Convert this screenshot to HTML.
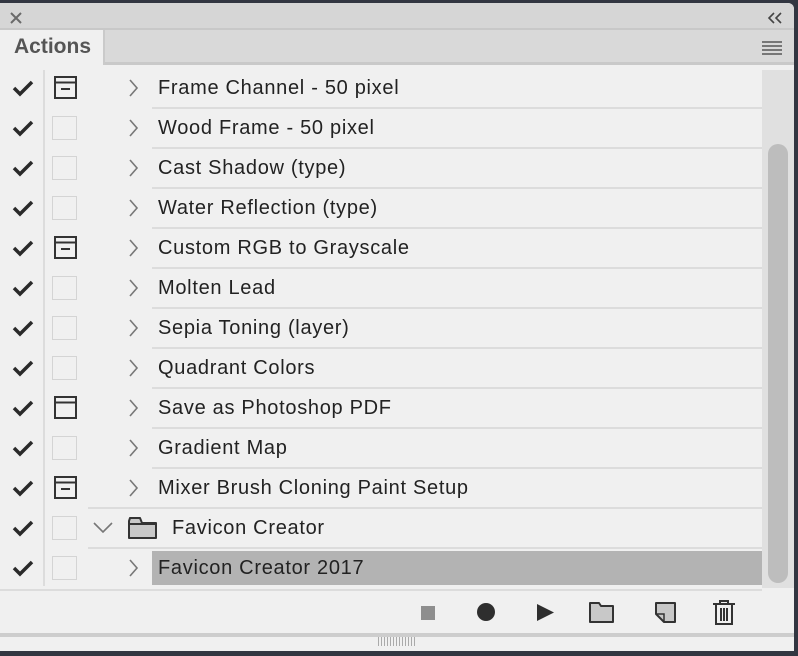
<!DOCTYPE html>
<html><head><meta charset="utf-8"><style>
*{margin:0;padding:0;box-sizing:border-box}
body{width:798px;height:656px;background:#323641;position:relative;overflow:hidden;font-family:"Liberation Sans",sans-serif}
.p{position:absolute}
.panel{left:0;top:3px;width:794px;height:648px;background:#f0f0f0;border-top-right-radius:6px;overflow:hidden}
.row{position:absolute;left:0;width:762px;height:40px}
.ck{position:absolute;left:12px;top:11px}
.bx{position:absolute;left:52px;top:8px;width:25px;height:24px;border:1.5px solid #d4d4d4}
.ch{position:absolute;left:128px;top:11px}
.t{position:absolute;left:158px;top:9px;font-size:20px;color:#222;letter-spacing:0.7px;white-space:nowrap}
.sep{position:absolute;left:152px;right:0;bottom:-1px;height:2px;background:#dcdcdc}
</style></head><body>
<div class="p panel">
 <div class="p" style="left:0;top:0;width:794px;height:25px;background:#d6d6d6"></div>
 <div class="p" style="left:0;top:25px;width:794px;height:2px;background:#c8c8c8"></div>
 <div class="p" style="left:0;top:27px;width:794px;height:32px;background:#d9d9d9"></div>
 <div class="p" style="left:0;top:59px;width:794px;height:3px;background:#c9c9c9"></div>
 <div class="p" style="left:0;top:27px;width:105px;height:35px;background:#f0f0f0;border-right:2px solid #cacaca"></div>
 <div class="p" style="left:14px;top:32px;font-size:21px;font-weight:bold;color:#555">Actions</div>
 <svg class="p" style="left:9px;top:8px" width="14" height="14"><path d="M2 2L12 12M12 2L2 12" stroke="#6a6a6a" stroke-width="2"/></svg>
 <svg class="p" style="left:767px;top:9px" width="16" height="12"><path d="M7 1L2 6L7 11M14 1L9 6L14 11" fill="none" stroke="#444" stroke-width="1.6"/></svg>
 <div class="p" style="left:762px;top:38px;width:20px;height:14px;background:repeating-linear-gradient(#777 0 2px,transparent 2px 4px)"></div>
 <div class="p" style="left:43px;top:67px;width:2px;height:516px;background:#dcdcdc"></div>
 <div class="p" style="left:762px;top:67px;width:32px;height:518px;background:#e0e0e0"></div>
 <div class="p" style="left:768px;top:141px;width:20px;height:439px;background:#bdbdbd;border-radius:10px"></div>
</div>
<div id="rows"></div>
<script>
const items=[["Frame Channel - 50 pixel",1],["Wood Frame - 50 pixel",0],["Cast Shadow (type)",0],["Water Reflection (type)",0],["Custom RGB to Grayscale",1],["Molten Lead",0],["Sepia Toning (layer)",0],["Quadrant Colors",0],["Save as Photoshop PDF",2],["Gradient Map",0],["Mixer Brush Cloning Paint Setup",1],["Favicon Creator",3],["Favicon Creator 2017",4]];
let h="";
items.forEach((it,i)=>{const y=68+40*i;let box;
if(it[1]==1)box='<svg class="p" style="left:54px;top:8px" width="24" height="24"><rect x="1" y="1" width="21" height="21" fill="none" stroke="#333" stroke-width="2"/><path d="M1 6.5H22M7 13H16" stroke="#333" stroke-width="2"/></svg>';
else if(it[1]==2)box='<svg class="p" style="left:54px;top:8px" width="24" height="24"><rect x="1" y="1" width="21" height="21" fill="none" stroke="#333" stroke-width="2"/><path d="M1 6.5H22" stroke="#333" stroke-width="2"/></svg>';
else box='<div class="bx"></div>';
let ch='<svg class="ch" width="12" height="18"><path d="M2 1L9 9L2 17" fill="none" stroke="#777" stroke-width="1.6"/></svg>';
let t='<div class="t">'+it[0]+'</div>',sep='<div class="sep"></div>',bg='';
if(it[1]==3){ch='<svg class="p" style="left:93px;top:14px" width="20" height="12"><path d="M1 1L10 10L19 1" fill="none" stroke="#777" stroke-width="1.6"/></svg><svg class="p" style="left:128px;top:9px" width="30" height="22"><path d="M1 4V21H28V6H14L12 1H2Z" fill="#c8c8c8" stroke="#333" stroke-width="2" stroke-linejoin="round"/><path d="M1 7H28" stroke="#333" stroke-width="2"/></svg>';t='<div class="t" style="left:172px">'+it[0]+'</div>';}
if(it[1]==4){bg='<div class="p" style="left:152px;top:3px;width:610px;height:34px;background:#b3b3b3"></div>';sep='<div class="p" style="left:0;width:762px;bottom:-3px;height:2px;background:#dcdcdc"></div>';}
if(it[1]==3)sep='<div class="p" style="left:88px;right:0;bottom:-1px;height:2px;background:#dcdcdc"></div>';
if(i==10)sep='<div class="p" style="left:88px;right:0;bottom:-1px;height:2px;background:#dcdcdc"></div>';
h+='<div class="row" style="top:'+y+'px">'+bg+'<svg class="ck" width="22" height="18"><path d="M2 9L8 15L20 3" fill="none" stroke="#2a2a2a" stroke-width="3.5"/></svg>'+box+ch+t+sep+'</div>';});
document.getElementById('rows').innerHTML=h;
</script>
<div class="p" style="left:0;top:633px;width:794px;height:4px;background:#cdcdcd"></div>
<div class="p" style="left:378px;top:637px;width:38px;height:9px;background:repeating-linear-gradient(90deg,#aaa 0 1px,transparent 1px 3px)"></div>
<div class="p" style="left:421px;top:606px;width:14px;height:14px;background:#8e8e8e"></div>
<div class="p" style="left:477px;top:603px;width:18px;height:18px;background:#2e2e2e;border-radius:50%"></div>
<svg class="p" style="left:536px;top:603px" width="20" height="20"><path d="M1 1L18 9.5L1 18Z" fill="#2e2e2e"/></svg>
<svg class="p" style="left:589px;top:602px" width="26" height="22"><path d="M1 1H10L12 4H24V20H1Z" fill="#c8c8c8" stroke="#333" stroke-width="2" stroke-linejoin="round"/></svg>
<svg class="p" style="left:655px;top:602px" width="22" height="22"><path d="M1 1H20V20H9L1 12Z" fill="#c8c8c8" stroke="#333" stroke-width="2" stroke-linejoin="round"/><path d="M1 12H9V20" fill="none" stroke="#333" stroke-width="1.5"/></svg>
<svg class="p" style="left:712px;top:599px" width="24" height="27"><path d="M1 5H23M8 5V2H16V5M4 5V25H20V5M9 9V22M12 9V22M15 9V22" fill="none" stroke="#333" stroke-width="2"/></svg>
</body></html>
